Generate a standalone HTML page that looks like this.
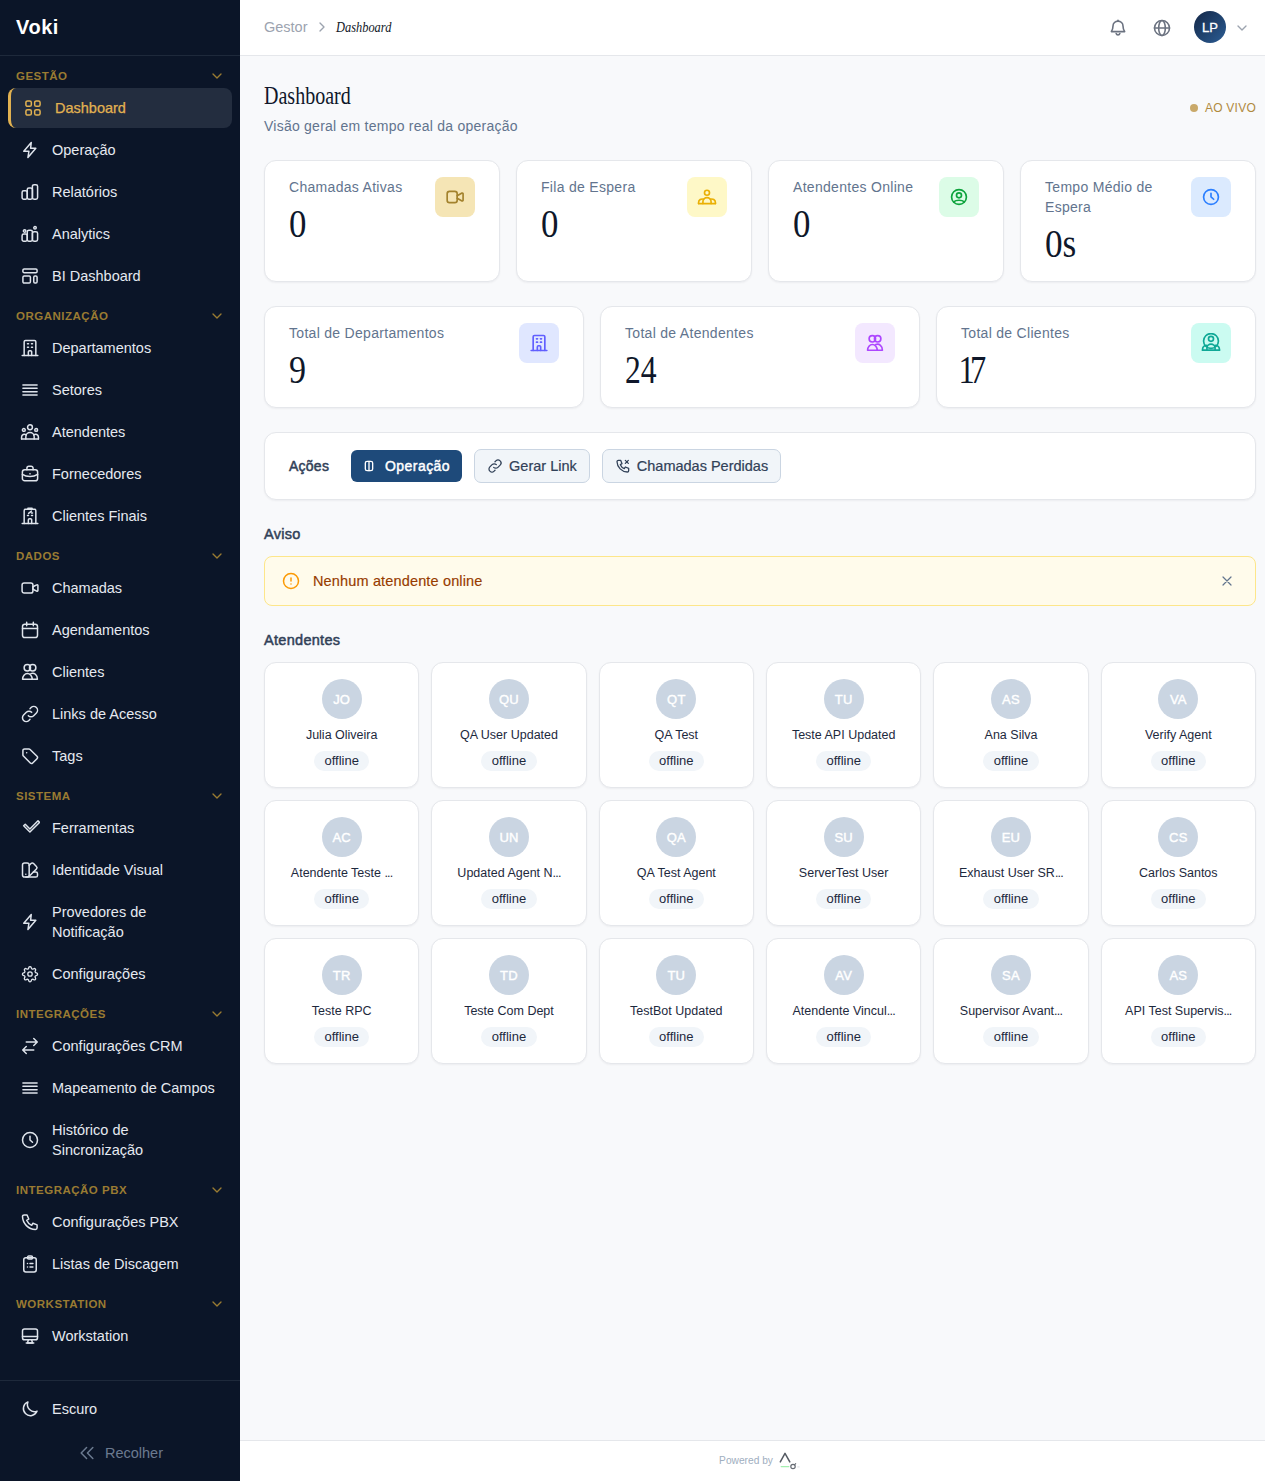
<!DOCTYPE html>
<html lang="pt-BR"><head><meta charset="utf-8"><title>Voki - Dashboard</title>
<style>
*{box-sizing:border-box;margin:0;padding:0}
html,body{width:1265px;height:1481px;overflow:hidden}
body{font-family:"Liberation Sans",sans-serif;background:#f8f9fb;color:#0f172a;position:relative;-webkit-font-smoothing:antialiased}
a{text-decoration:none;color:inherit;display:block}
svg{display:block;flex:none}
/* sidebar */
.sb{position:absolute;left:0;top:0;width:240px;height:1481px;background:#0b1528;color:#e2e8f0}
.logo{height:56px;border-bottom:1px solid #1e293b;padding-left:16px;line-height:54px;font-size:20px;font-weight:700;color:#fff;letter-spacing:.55px}
nav{padding:8px 8px 0}
.sec{margin-top:8px}
.sec.first{margin-top:0}
.sl{height:24px;display:flex;align-items:center;justify-content:space-between;padding:0 7px 0 8px;color:#9a7b32;font-size:11.500px;font-weight:700;letter-spacing:.5px}
.sl .cv{color:#9a7b32}
.it{height:40px;display:flex;align-items:center;padding:0 12px;border-radius:8px;font-size:14.500px;white-space:nowrap;color:#e5e9f0;margin-bottom:2px}
.sec .it:last-child{margin-bottom:0}
.it .ic{margin-right:12px;color:#dfe4ec}
.it.two{height:60px;line-height:20px}
.it.act{background:#232d3f;border-left:3px solid #e2b251;color:#e2b251;font-weight:400;-webkit-text-stroke:.25px #e2b251}
.it.act .ic{color:#e2b251}
.sbb{position:absolute;left:0;bottom:0;width:240px;border-top:1px solid #1e293b;padding:8px}
.sbb .it{margin-bottom:4px}
.rec{height:40px;display:flex;align-items:center;justify-content:center;color:#6b7a90;font-size:14.500px}
.rec svg{margin-right:8px}
/* right */
.rt{position:absolute;left:240px;top:0;width:1025px;height:1481px;overflow:hidden}
.hd{height:56px;background:#fff;border-bottom:1px solid #e5e7eb;display:flex;align-items:center;justify-content:space-between;padding:0 15px 0 24px}
.bc{display:flex;align-items:center;margin-top:-1px;font-size:14.500px;color:#9ca3af}
.bc .bcc{margin:0 6px 0 6px;color:#9ca3af}
.bc .d{font-family:"Liberation Serif",serif;font-style:italic;color:#111827;font-size:15.500px;display:inline-block;transform:scaleX(.8);transform-origin:0 50%}
.hr{display:flex;align-items:center;color:#6b7280;margin-top:0}
.hr .hg{margin-left:24px}
.av{width:32px;height:32px;border-radius:50%;background:linear-gradient(135deg,#162c4e 10%,#2a5a90 95%);color:#fff;font-size:13px;font-weight:400;-webkit-text-stroke:.3px #fff;display:flex;align-items:center;justify-content:center;margin-left:22px;margin-top:-1px}
.hr .hc{margin-left:8px;color:#9ca3af}
.mn{padding:24px 9px 0 24px}
.ph{display:flex;justify-content:space-between;height:80px}
h1{font-family:"Liberation Serif",serif;font-weight:400;font-size:26px;line-height:32px;margin-top:0;color:#0f172a;transform:scaleX(.77);transform-origin:0 50%;white-space:nowrap}
.sub{font-size:14px;letter-spacing:.24px;line-height:20px;color:#62748e;margin-top:4px}
.live{display:flex;align-items:center;color:#b08a3e;font-size:12px;font-weight:400;letter-spacing:.25px;height:14px;margin-top:21px}
.live i{width:8px;height:8px;border-radius:50%;background:#c9a96a;margin-right:7px;margin-top:-1px}
.card{background:#fff;border:1px solid #e5e7eb;border-radius:12px;box-shadow:0 1px 2px rgba(15,23,42,.05)}
.g4{display:grid;grid-template-columns:repeat(4,236px);gap:16px;height:122px}
.g3{display:grid;grid-template-columns:repeat(3,320px);gap:16px;height:102px;margin-top:24px}
.st{display:flex;justify-content:space-between;padding:16px 24px 0 24px}
.lb{font-size:14px;letter-spacing:.3px;line-height:20px;color:#62748e}
.vl{font-family:"Liberation Serif",serif;font-size:40.500px;line-height:43px;margin-top:5px;color:#0f172a;transform:scaleX(.77);transform-origin:0 50%;white-space:nowrap}
.ib{width:40px;height:40px;border-radius:8px;display:flex;align-items:center;justify-content:center}
.c1{background:#f5e5b5;color:#a3822d}.c2{background:#fef8c7;color:#eab005}.c3{background:#dcfce7;color:#0da33c}.c4{background:#dbeafe;color:#2b7fff}
.c5{background:#e0e7ff;color:#615fff}.c6{background:#f3e8ff;color:#ad46ff}.c7{background:#cbfbf1;color:#0fa896}
.ac{height:68px;margin-top:24px;display:flex;align-items:center;padding:0 24px}
.al{font-size:14px;font-weight:400;-webkit-text-stroke:.5px #314158;letter-spacing:.25px;color:#314158;width:62px}
.btn{height:32px;border-radius:6px;display:flex;align-items:center;padding:0 12px;font-size:14.500px;margin-right:12px}
.btn svg{margin-right:6px}
.pri{background:#1e4a7a;color:#fff;font-weight:400;-webkit-text-stroke:.45px #fff;letter-spacing:.45px;font-size:14px}
.sec2{background:#f1f5f9;border:1px solid #cad5e2;color:#314158;-webkit-text-stroke:.2px #314158;height:34px;border-radius:7px}
.h3{font-size:14.500px;font-weight:400;-webkit-text-stroke:.5px #314158;letter-spacing:.3px;color:#314158;height:20px;line-height:20px}
.a1{margin-top:24px}
.alert{height:50px;margin-top:12px;background:#fffbeb;border:1px solid #fde68a;border-radius:8px;display:flex;align-items:center;padding:0 20px 0 17px;color:#973c00;-webkit-text-stroke:.15px #973c00;font-size:14.500px;letter-spacing:.15px}
.alert .ai{color:#fb9a05;margin-right:13px}
.alert span{flex:1}
.alert .ax{color:#62748e}
.a2{margin-top:24px}
.g6{display:grid;grid-template-columns:repeat(6,1fr);gap:12px 12px;margin-top:12px}
.agc{height:126px;display:flex;flex-direction:column;align-items:center;padding-top:16px}
.aa{width:40px;height:40px;border-radius:50%;background:#cad5e2;color:#fff;font-size:13px;font-weight:400;-webkit-text-stroke:.4px #fff;letter-spacing:.2px;display:flex;align-items:center;justify-content:center}
.an{font-size:12.500px;color:#1d293d;margin-top:8px;line-height:16px;white-space:nowrap}
.ao{font-size:13px;color:#1d293d;background:#f1f5f9;border-radius:10px;height:20px;line-height:20px;padding:0 10.500px;margin-top:8px}
.ft{position:absolute;left:0;bottom:0;width:1040px;height:41px;background:#fff;border-top:1px solid #e5e7eb;display:flex;align-items:center;justify-content:center;font-size:10.200px;color:#a0aec0}
.ft .pl{margin-left:6px;margin-top:0}.ft span{margin-top:-1px}
.el{letter-spacing:-.8px}
.pri svg{margin-left:-2px;margin-right:8px}

</style></head><body>
<aside class="sb">
<div class="logo">Voki</div>
<nav><div class="sec first"><div class="sl"><span>GESTÃO</span><svg class="cv" width="16" height="16" viewBox="0 0 24 24" fill="none" stroke="currentColor" stroke-width="2" stroke-linecap="round" stroke-linejoin="round" ><path d="m6 9 6 6 6-6"/></svg></div><a class="it act"><svg class="ic" width="20" height="20" viewBox="0 0 24 24" fill="none" stroke="currentColor" stroke-width="1.8" stroke-linecap="round" stroke-linejoin="round" ><rect x="3.5" y="3.5" width="6.5" height="6.5" rx="2"/><rect x="14" y="3.5" width="6.5" height="6.5" rx="2"/><rect x="3.5" y="14" width="6.5" height="6.5" rx="2"/><rect x="14" y="14" width="6.5" height="6.5" rx="2"/></svg><span>Dashboard</span></a><a class="it"><svg class="ic" width="20" height="20" viewBox="0 0 24 24" fill="none" stroke="currentColor" stroke-width="1.8" stroke-linecap="round" stroke-linejoin="round" ><path d="M13.5 3 4.5 13.5h6.2L9.5 21l9.5-11h-6.3z"/></svg><span>Operação</span></a><a class="it"><svg class="ic" width="20" height="20" viewBox="0 0 24 24" fill="none" stroke="currentColor" stroke-width="1.8" stroke-linecap="round" stroke-linejoin="round" ><rect x="2.500" y="10.500" width="6.200" height="10.100" rx="2"/><rect x="8.700" y="7.100" width="6.200" height="13.500" rx="2"/><rect x="14.900" y="3.200" width="6.200" height="17.400" rx="2"/></svg><span>Relatórios</span></a><a class="it"><svg class="ic" width="20" height="20" viewBox="0 0 24 24" fill="none" stroke="currentColor" stroke-width="1.8" stroke-linecap="round" stroke-linejoin="round" ><rect x="2.500" y="12" width="6.200" height="8.600" rx="2"/><rect x="8.700" y="7.600" width="6.200" height="13" rx="2"/><rect x="14.900" y="9.200" width="6.200" height="11.400" rx="2"/><circle cx="5.600" cy="8.300" r="1.500"/><circle cx="18" cy="4.600" r="1.500"/></svg><span>Analytics</span></a><a class="it"><svg class="ic" width="20" height="20" viewBox="0 0 24 24" fill="none" stroke="currentColor" stroke-width="1.8" stroke-linecap="round" stroke-linejoin="round" ><rect x="3.5" y="3.5" width="17" height="4.5" rx="1.5"/><rect x="3.5" y="12" width="9" height="8.5" rx="1.5"/><rect x="16.5" y="12" width="4" height="8.5" rx="1.5"/></svg><span>BI Dashboard</span></a></div><div class="sec"><div class="sl"><span>ORGANIZAÇÃO</span><svg class="cv" width="16" height="16" viewBox="0 0 24 24" fill="none" stroke="currentColor" stroke-width="2" stroke-linecap="round" stroke-linejoin="round" ><path d="m6 9 6 6 6-6"/></svg></div><a class="it"><svg class="ic" width="20" height="20" viewBox="0 0 24 24" fill="none" stroke="currentColor" stroke-width="1.8" stroke-linecap="round" stroke-linejoin="round" ><path d="M2.600 21h18.800"/><path d="M5 21V4.600A1.600 1.600 0 0 1 6.600 3h10.800A1.600 1.600 0 0 1 19 4.600V21"/><path d="M10 21v-4.300a1.400 1.400 0 0 1 1.400-1.400h1.200a1.400 1.400 0 0 1 1.400 1.400V21"/><path d="M9 7h1.200M13.800 7H15M9 11h1.200M13.800 11H15"/></svg><span>Departamentos</span></a><a class="it"><svg class="ic" width="20" height="20" viewBox="0 0 24 24" fill="none" stroke="currentColor" stroke-width="1.8" stroke-linecap="round" stroke-linejoin="round" ><path d="M3.5 6h17M3.5 10h17M3.5 14h17M3.5 18h17"/></svg><span>Setores</span></a><a class="it"><svg class="ic" width="20" height="20" viewBox="0 0 24 24" fill="none" stroke="currentColor" stroke-width="1.8" stroke-linecap="round" stroke-linejoin="round" ><circle cx="12" cy="6.300" r="2.900"/><circle cx="4.600" cy="9.500" r="1.700"/><circle cx="19.400" cy="9.500" r="1.700"/><path d="M7 20.300v-2.600a5 5 0 0 1 10 0v2.600"/><path d="M1.900 20.300v-2.300a3.300 3.300 0 0 1 5.600-2.400M22.100 20.300v-2.300a3.300 3.300 0 0 0-5.600-2.400"/><path d="M1.900 20.300h20.200"/></svg><span>Atendentes</span></a><a class="it"><svg class="ic" width="20" height="20" viewBox="0 0 24 24" fill="none" stroke="currentColor" stroke-width="1.8" stroke-linecap="round" stroke-linejoin="round" ><rect x="2.850" y="6.900" width="18.300" height="13.200" rx="2.800"/><path d="M8.300 6.900V5a2.400 2.400 0 0 1 2.400-2.400h2.600A2.400 2.400 0 0 1 15.700 5v1.900"/><path d="M2.850 12.500c2.500 1.700 5.700 2.600 9.150 2.600s6.650-.9 9.150-2.600"/><path d="M12 11.800v.01" stroke-width="2"/></svg><span>Fornecedores</span></a><a class="it"><svg class="ic" width="20" height="20" viewBox="0 0 24 24" fill="none" stroke="currentColor" stroke-width="1.8" stroke-linecap="round" stroke-linejoin="round" ><path d="M2.600 21h18.800"/><path d="M5 21V5.600A1.600 1.600 0 0 1 6.600 4h10.800A1.600 1.600 0 0 1 19 5.600V21"/><path d="M10 21v-4.300a1.400 1.400 0 0 1 1.400-1.400h1.200a1.400 1.400 0 0 1 1.400 1.400V21"/><path d="M9.500 4V2.600h5V4"/><path d="M10.300 8.800 13.700 6.200M9 11.500h1.200M13.800 11.500H15M13.800 8.500H15"/></svg><span>Clientes Finais</span></a></div><div class="sec"><div class="sl"><span>DADOS</span><svg class="cv" width="16" height="16" viewBox="0 0 24 24" fill="none" stroke="currentColor" stroke-width="2" stroke-linecap="round" stroke-linejoin="round" ><path d="m6 9 6 6 6-6"/></svg></div><a class="it"><svg class="ic" width="20" height="20" viewBox="0 0 24 24" fill="none" stroke="currentColor" stroke-width="1.8" stroke-linecap="round" stroke-linejoin="round" ><rect x="2.500" y="6" width="13" height="12" rx="2.500"/><path d="M15.500 10.500 20 8.200a1 1 0 0 1 1.500.9v5.800a1 1 0 0 1-1.500.9l-4.500-2.300z"/></svg><span>Chamadas</span></a><a class="it"><svg class="ic" width="20" height="20" viewBox="0 0 24 24" fill="none" stroke="currentColor" stroke-width="1.8" stroke-linecap="round" stroke-linejoin="round" ><rect x="3" y="5" width="18" height="16" rx="2.800"/><path d="M8 2.800v4M16 2.800v4"/><path d="M3 10.300h18"/></svg><span>Agendamentos</span></a><a class="it"><svg class="ic" width="20" height="20" viewBox="0 0 24 24" fill="none" stroke="currentColor" stroke-width="1.8" stroke-linecap="round" stroke-linejoin="round" ><circle cx="8.800" cy="6.900" r="3.850"/><circle cx="15.200" cy="6.900" r="3.850"/><path d="M3.100 20.700a5.800 6.900 0 0 1 11.600 0z"/><path d="M13 13.900a5.800 6.900 0 0 1 7.900 6.800h-6.200"/></svg><span>Clientes</span></a><a class="it"><svg class="ic" width="20" height="20" viewBox="0 0 24 24" fill="none" stroke="currentColor" stroke-width="1.8" stroke-linecap="round" stroke-linejoin="round" ><path d="M10 14a4.500 4.500 0 0 0 6.400 0l3.300-3.300a4.500 4.500 0 0 0-6.400-6.400l-1.300 1.300"/><path d="M14 10a4.500 4.500 0 0 0-6.400 0l-3.300 3.300a4.500 4.500 0 0 0 6.400 6.400l1.300-1.300"/></svg><span>Links de Acesso</span></a><a class="it"><svg class="ic" width="20" height="20" viewBox="0 0 24 24" fill="none" stroke="currentColor" stroke-width="1.8" stroke-linecap="round" stroke-linejoin="round" ><path d="M3.500 5.500a2 2 0 0 1 2-2h5.200a2 2 0 0 1 1.400.6l8.300 8.300a2 2 0 0 1 0 2.800l-5.200 5.200a2 2 0 0 1-2.800 0L4.100 12.100a2 2 0 0 1-.6-1.400z"/><path d="M8 8v.01" stroke-width="1.800"/></svg><span>Tags</span></a></div><div class="sec"><div class="sl"><span>SISTEMA</span><svg class="cv" width="16" height="16" viewBox="0 0 24 24" fill="none" stroke="currentColor" stroke-width="2" stroke-linecap="round" stroke-linejoin="round" ><path d="m6 9 6 6 6-6"/></svg></div><a class="it"><svg class="ic" width="20" height="20" viewBox="0 0 24 24" fill="none" stroke="currentColor" stroke-width="1.8" stroke-linecap="round" stroke-linejoin="round" ><path d="M4.400 9.400 6.300 7.500 11.900 13.100 21.600 3.400 23.400 5.300 11.900 16.800z"/></svg><span>Ferramentas</span></a><a class="it"><svg class="ic" width="20" height="20" viewBox="0 0 24 24" fill="none" stroke="currentColor" stroke-width="1.8" stroke-linecap="round" stroke-linejoin="round" ><rect x="3" y="3.500" width="8" height="17" rx="2.500"/><path d="M7 17v.01" stroke-width="1.800"/><path d="M11 6.500l2.200-2.200a2.200 2.200 0 0 1 3.100 0l3.400 3.400a2.200 2.200 0 0 1 0 3.100L11 19.500"/><path d="M16 14.500h3a2 2 0 0 1 2 2v2a2 2 0 0 1-2 2H7"/></svg><span>Identidade Visual</span></a><a class="it two"><svg class="ic" width="20" height="20" viewBox="0 0 24 24" fill="none" stroke="currentColor" stroke-width="1.8" stroke-linecap="round" stroke-linejoin="round" ><path d="M13.5 3 4.5 13.5h6.2L9.5 21l9.5-11h-6.3z"/></svg><span>Provedores de<br>Notificação</span></a><a class="it"><svg class="ic" width="20" height="20" viewBox="0 0 24 24" fill="none" stroke="currentColor" stroke-width="1.8" stroke-linecap="round" stroke-linejoin="round" ><g transform="translate(12 12) scale(.88) translate(-12 -12)"><circle cx="12" cy="12" r="3"/><path d="M10.300 3.300a1.750 1.750 0 0 1 3.400 0l.2.800a1.750 1.750 0 0 0 2.500 1.100l.7-.4a1.750 1.750 0 0 1 2.400 2.400l-.4.700a1.750 1.750 0 0 0 1.100 2.500l.8.200a1.750 1.750 0 0 1 0 3.400l-.8.200a1.750 1.750 0 0 0-1.100 2.500l.4.700a1.750 1.750 0 0 1-2.400 2.400l-.7-.4a1.750 1.750 0 0 0-2.500 1.100l-.2.800a1.750 1.750 0 0 1-3.400 0l-.2-.8a1.750 1.750 0 0 0-2.500-1.100l-.7.400a1.750 1.750 0 0 1-2.400-2.400l.4-.7a1.750 1.750 0 0 0-1.100-2.500l-.8-.2a1.750 1.750 0 0 1 0-3.400l.8-.2a1.750 1.750 0 0 0 1.100-2.500l-.4-.7a1.750 1.750 0 0 1 2.400-2.400l.7.400a1.750 1.750 0 0 0 2.500-1.100z"/></g></svg><span>Configurações</span></a></div><div class="sec"><div class="sl"><span>INTEGRAÇÕES</span><svg class="cv" width="16" height="16" viewBox="0 0 24 24" fill="none" stroke="currentColor" stroke-width="2" stroke-linecap="round" stroke-linejoin="round" ><path d="m6 9 6 6 6-6"/></svg></div><a class="it"><svg class="ic" width="20" height="20" viewBox="0 0 24 24" fill="none" stroke="currentColor" stroke-width="1.8" stroke-linecap="round" stroke-linejoin="round" ><path d="M7.500 7.200h13M16.500 3l4.200 4.200-4.200 4.200"/><path d="M16.500 16.800h-13M7.500 12.600l-4.200 4.200 4.200 4.200"/></svg><span>Configurações CRM</span></a><a class="it"><svg class="ic" width="20" height="20" viewBox="0 0 24 24" fill="none" stroke="currentColor" stroke-width="1.8" stroke-linecap="round" stroke-linejoin="round" ><path d="M3.5 6h17M3.5 10h17M3.5 14h17M3.5 18h17"/></svg><span>Mapeamento de Campos</span></a><a class="it two"><svg class="ic" width="20" height="20" viewBox="0 0 24 24" fill="none" stroke="currentColor" stroke-width="1.8" stroke-linecap="round" stroke-linejoin="round" ><circle cx="12" cy="12" r="9"/><path d="M12 7.500V12l3 2.700"/></svg><span>Histórico de<br>Sincronização</span></a></div><div class="sec"><div class="sl"><span>INTEGRAÇÃO PBX</span><svg class="cv" width="16" height="16" viewBox="0 0 24 24" fill="none" stroke="currentColor" stroke-width="2" stroke-linecap="round" stroke-linejoin="round" ><path d="m6 9 6 6 6-6"/></svg></div><a class="it"><svg class="ic" width="20" height="20" viewBox="0 0 24 24" fill="none" stroke="currentColor" stroke-width="1.8" stroke-linecap="round" stroke-linejoin="round" ><path d="M5 3.500h3.500l2 5-2.500 1.500a11 11 0 0 0 6 6l1.500-2.500 5 2v3.500a2 2 0 0 1-2 2A16 16 0 0 1 3 5.500a2 2 0 0 1 2-2z"/></svg><span>Configurações PBX</span></a><a class="it"><svg class="ic" width="20" height="20" viewBox="0 0 24 24" fill="none" stroke="currentColor" stroke-width="1.8" stroke-linecap="round" stroke-linejoin="round" ><rect x="4.500" y="4.500" width="15" height="17" rx="2.500"/><path d="M9 4.500V4a1.500 1.500 0 0 1 1.500-1.500h3A1.500 1.500 0 0 1 15 4v.5a1.500 1.500 0 0 1-1.500 1.500h-3A1.500 1.500 0 0 1 9 4.500z"/><path d="M9 11.500h.01M9 15.500h.01" stroke-width="1.800"/><path d="M12 11.500h3.500M12 15.500h3.500"/></svg><span>Listas de Discagem</span></a></div><div class="sec"><div class="sl"><span>WORKSTATION</span><svg class="cv" width="16" height="16" viewBox="0 0 24 24" fill="none" stroke="currentColor" stroke-width="2" stroke-linecap="round" stroke-linejoin="round" ><path d="m6 9 6 6 6-6"/></svg></div><a class="it"><svg class="ic" width="20" height="20" viewBox="0 0 24 24" fill="none" stroke="currentColor" stroke-width="1.8" stroke-linecap="round" stroke-linejoin="round" ><rect x="3" y="3.500" width="18" height="13" rx="2.500"/><path d="M3 12.500h18"/><path d="M10 16.500 9 20.500h6l-1-4"/><path d="M7.500 20.500h9"/></svg><span>Workstation</span></a></div></nav>
<div class="sbb">
<a class="it"><svg class="ic" width="20" height="20" viewBox="0 0 24 24" fill="none" stroke="currentColor" stroke-width="1.8" stroke-linecap="round" stroke-linejoin="round" ><path d="M20.500 14.500A8.500 8.500 0 0 1 9.500 3.500a8.500 8.500 0 1 0 11 11z"/></svg><span>Escuro</span></a>
<a class="rec"><svg class="ic" width="20" height="20" viewBox="0 0 24 24" fill="none" stroke="currentColor" stroke-width="1.8" stroke-linecap="round" stroke-linejoin="round" ><path d="M11.500 5.500 5 12l6.500 6.500M19 5.500 12.500 12l6.500 6.500"/></svg><span>Recolher</span></a>
</div>
</aside>
<div class="rt"><header class="hd">
<div class="bc"><span class="g">Gestor</span><svg class="bcc" width="16" height="16" viewBox="0 0 24 24" fill="none" stroke="currentColor" stroke-width="2" stroke-linecap="round" stroke-linejoin="round" ><path d="m9 18 6-6-6-6"/></svg><span class="d">Dashboard</span></div>
<div class="hr">
<svg class="hb" width="20" height="20" viewBox="0 0 24 24" fill="none" stroke="currentColor" stroke-width="1.9" stroke-linecap="round" stroke-linejoin="round" ><path d="M6 9.700a6 6 0 0 1 12 0c0 3.800 1.100 5.300 2 6.600H4c.900-1.300 2-2.800 2-6.600z"/><path d="M9.800 18.700a2.300 2.300 0 0 0 4.400 0"/><path d="M12 2.600v1"/></svg>
<svg class="hg" width="20" height="20" viewBox="0 0 24 24" fill="none" stroke="currentColor" stroke-width="1.9" stroke-linecap="round" stroke-linejoin="round" ><circle cx="12" cy="12" r="9"/><path d="M3 12h18"/><ellipse cx="12" cy="12" rx="4" ry="9"/></svg>
<div class="av">LP</div>
<svg class="hc" width="16" height="16" viewBox="0 0 24 24" fill="none" stroke="currentColor" stroke-width="2" stroke-linecap="round" stroke-linejoin="round" ><path d="m6 9 6 6 6-6"/></svg>
</div>
</header><main class="mn">
<div class="ph"><div><h1>Dashboard</h1><p class="sub">Visão geral em tempo real da operação</p></div><div class="live"><i></i><span>AO VIVO</span></div></div>
<div class="g4"><div class="card st"><div class="sx"><div class="lb">Chamadas Ativas</div><div class="vl" style="transform:scaleX(0.86)">0</div></div><div class="ib c1"><svg class="ic" width="20" height="20" viewBox="0 0 24 24" fill="none" stroke="currentColor" stroke-width="2" stroke-linecap="round" stroke-linejoin="round" ><rect x="2.600" y="5.200" width="12" height="13.600" rx="2.800"/><path d="M14.600 10.600 20.400 7.300a.9.9 0 0 1 1.300.8v7.800a.9.900 0 0 1-1.300.8l-5.800-3.300"/></svg></div></div><div class="card st"><div class="sx"><div class="lb">Fila de Espera</div><div class="vl" style="transform:scaleX(0.86)">0</div></div><div class="ib c2"><svg class="ic" width="20" height="20" viewBox="0 0 24 24" fill="none" stroke="currentColor" stroke-width="2" stroke-linecap="round" stroke-linejoin="round" ><circle cx="12" cy="6.900" r="3"/><path d="M7.100 19.900v-2.300a4.900 4.900 0 0 1 9.800 0v2.300"/><path d="M1.900 19.900v-1.200a4.300 4.300 0 0 1 6.100-3.900M22.100 19.900v-1.200a4.300 4.300 0 0 0-6.100-3.900"/><path d="M1.900 19.900h20.200"/></svg></div></div><div class="card st"><div class="sx"><div class="lb">Atendentes Online</div><div class="vl" style="transform:scaleX(0.86)">0</div></div><div class="ib c3"><svg class="ic" width="20" height="20" viewBox="0 0 24 24" fill="none" stroke="currentColor" stroke-width="2" stroke-linecap="round" stroke-linejoin="round" ><circle cx="12" cy="12" r="8.900"/><circle cx="12" cy="10" r="3"/><path d="M5.600 17.900c1.500-1.300 3.800-2 6.400-2s4.900.7 6.400 2"/></svg></div></div><div class="card st"><div class="sx"><div class="lb">Tempo Médio de<br>Espera</div><div class="vl" style="transform:scaleX(0.87)">0s</div></div><div class="ib c4"><svg class="ic" width="20" height="20" viewBox="0 0 24 24" fill="none" stroke="currentColor" stroke-width="2" stroke-linecap="round" stroke-linejoin="round" ><circle cx="12" cy="12" r="8.900"/><path d="M12 7.600v4.200l3.200 2.900"/></svg></div></div></div><div class="g3"><div class="card st"><div class="sx"><div class="lb">Total de Departamentos</div><div class="vl" style="transform:scaleX(0.84)">9</div></div><div class="ib c5"><svg class="ic" width="20" height="20" viewBox="0 0 24 24" fill="none" stroke="currentColor" stroke-width="2" stroke-linecap="round" stroke-linejoin="round" ><path d="M2.600 21h18.800"/><path d="M5 21V4.600A1.600 1.600 0 0 1 6.600 3h10.800A1.600 1.600 0 0 1 19 4.600V21"/><path d="M10 21v-4.300a1.400 1.400 0 0 1 1.400-1.400h1.200a1.400 1.400 0 0 1 1.400 1.400V21"/><path d="M9 7h1.200M13.800 7H15M9 11h1.200M13.800 11H15"/></svg></div></div><div class="card st"><div class="sx"><div class="lb">Total de Atendentes</div><div class="vl" style="transform:scaleX(0.78)">24</div></div><div class="ib c6"><svg class="ic" width="20" height="20" viewBox="0 0 24 24" fill="none" stroke="currentColor" stroke-width="2" stroke-linecap="round" stroke-linejoin="round" ><circle cx="8.800" cy="6.900" r="3.850"/><circle cx="15.200" cy="6.900" r="3.850"/><path d="M3.100 20.700a5.800 6.900 0 0 1 11.600 0z"/><path d="M13 13.900a5.800 6.900 0 0 1 7.900 6.800h-6.200"/></svg></div></div><div class="card st"><div class="sx"><div class="lb">Total de Clientes</div><div class="vl" style="transform:scaleX(0.8)"><span style="letter-spacing:-6px;margin-left:-3px">1</span>7</div></div><div class="ib c7"><svg class="ic" width="20" height="20" viewBox="0 0 24 24" fill="none" stroke="currentColor" stroke-width="2" stroke-linecap="round" stroke-linejoin="round" ><circle cx="12" cy="9.600" r="8.900"/><circle cx="12" cy="7" r="3"/><path d="M7.100 20.600v-2.400a4.900 4.900 0 0 1 9.800 0v2.400"/><path d="M1.900 20.600v-1.500a4.300 4.300 0 0 1 5.600-4M22.100 20.600v-1.500a4.300 4.300 0 0 0-5.600-4"/><path d="M1.900 20.600h20.200"/></svg></div></div></div><div class="card ac">
<span class="al">Ações</span>
<a class="btn pri"><svg class="ic" width="16" height="16" viewBox="0 0 24 24" fill="none" stroke="currentColor" stroke-width="2" stroke-linecap="round" stroke-linejoin="round" ><rect x="6.500" y="5" width="11" height="14" rx="2.600"/><path d="M12 5v14"/></svg><span>Operação</span></a>
<a class="btn sec2"><svg class="ic" width="16" height="16" viewBox="0 0 24 24" fill="none" stroke="currentColor" stroke-width="1.9" stroke-linecap="round" stroke-linejoin="round" ><path d="M10 14a4.500 4.500 0 0 0 6.400 0l3.300-3.300a4.500 4.500 0 0 0-6.400-6.400l-1.300 1.300"/><path d="M14 10a4.500 4.500 0 0 0-6.400 0l-3.300 3.300a4.500 4.500 0 0 0 6.400 6.400l1.300-1.300"/></svg><span>Gerar Link</span></a>
<a class="btn sec2"><svg class="ic" width="16" height="16" viewBox="0 0 24 24" fill="none" stroke="currentColor" stroke-width="1.9" stroke-linecap="round" stroke-linejoin="round" ><path d="M5 3.500h3.500l2 5-2.500 1.500a11 11 0 0 0 6 6l1.500-2.500 5 2v3.500a2 2 0 0 1-2 2A16 16 0 0 1 3 5.500a2 2 0 0 1 2-2z"/><path d="M15.500 3.500l4.500 4.500M20 3.500 15.500 8"/></svg><span>Chamadas Perdidas</span></a>
</div><div class="h3 a1">Aviso</div>
<div class="alert"><svg class="ai" width="18" height="18" viewBox="0 0 24 24" fill="none" stroke="currentColor" stroke-width="2" stroke-linecap="round" stroke-linejoin="round" ><circle cx="12" cy="12" r="10"/><path d="M12 8v4"/><path d="M12 16h.01"/></svg><span>Nenhum atendente online</span><svg class="ax" width="16" height="16" viewBox="0 0 24 24" fill="none" stroke="currentColor" stroke-width="1.8" stroke-linecap="round" stroke-linejoin="round" ><path d="M18 6 6 18M6 6l12 12"/></svg></div><div class="h3 a2">Atendentes</div><div class="g6"><div class="card agc"><div class="aa">JO</div><div class="an">Julia Oliveira</div><div class="ao">offline</div></div><div class="card agc"><div class="aa">QU</div><div class="an">QA User Updated</div><div class="ao">offline</div></div><div class="card agc"><div class="aa">QT</div><div class="an">QA Test</div><div class="ao">offline</div></div><div class="card agc"><div class="aa">TU</div><div class="an">Teste API Updated</div><div class="ao">offline</div></div><div class="card agc"><div class="aa">AS</div><div class="an">Ana Silva</div><div class="ao">offline</div></div><div class="card agc"><div class="aa">VA</div><div class="an">Verify Agent</div><div class="ao">offline</div></div><div class="card agc"><div class="aa">AC</div><div class="an">Atendente Teste&nbsp;<span class="el"><span class="el">...</span></span></div><div class="ao">offline</div></div><div class="card agc"><div class="aa">UN</div><div class="an">Updated Agent N<span class="el">...</span></div><div class="ao">offline</div></div><div class="card agc"><div class="aa">QA</div><div class="an">QA Test Agent</div><div class="ao">offline</div></div><div class="card agc"><div class="aa">SU</div><div class="an">ServerTest User</div><div class="ao">offline</div></div><div class="card agc"><div class="aa">EU</div><div class="an">Exhaust User SR<span class="el">...</span></div><div class="ao">offline</div></div><div class="card agc"><div class="aa">CS</div><div class="an">Carlos Santos</div><div class="ao">offline</div></div><div class="card agc"><div class="aa">TR</div><div class="an">Teste RPC</div><div class="ao">offline</div></div><div class="card agc"><div class="aa">TD</div><div class="an">Teste Com Dept</div><div class="ao">offline</div></div><div class="card agc"><div class="aa">TU</div><div class="an">TestBot Updated</div><div class="ao">offline</div></div><div class="card agc"><div class="aa">AV</div><div class="an">Atendente Vincul<span class="el">...</span></div><div class="ao">offline</div></div><div class="card agc"><div class="aa">SA</div><div class="an">Supervisor Avant<span class="el">...</span></div><div class="ao">offline</div></div><div class="card agc"><div class="aa">AS</div><div class="an">API Test Supervis<span class="el">...</span></div><div class="ao">offline</div></div></div>
</main>
<footer class="ft"><span>Powered by</span><svg class="pl" width="22" height="18" viewBox="0 0 22 18" fill="none" stroke-linecap="round" stroke-linejoin="round"><path d="M1.300 9.900 6 1.300l4.800 8.600" stroke="#555b63" stroke-width="1.500"/><path d="M2.200 14.600h7.600" stroke="#a5efb0" stroke-width="1.400"/><circle cx="14" cy="14.500" r="2.200" stroke="#666b73" stroke-width="1.200"/><path d="M15.700 12.700l1-1.100" stroke="#666b73" stroke-width="1.100"/><path d="M18.300 14.900h2.300" stroke="#e2e4e8" stroke-width="1.300" stroke-linecap="butt"/></svg></footer></div>
</body></html>
